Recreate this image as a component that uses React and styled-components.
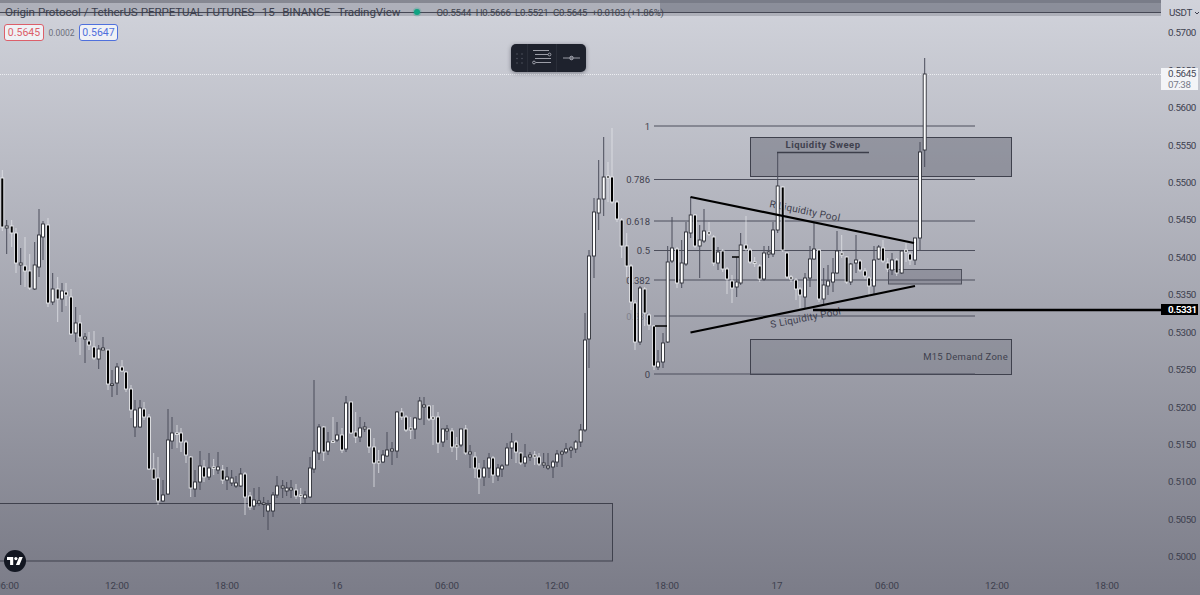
import React from "react";
import styled, { createGlobalStyle } from "styled-components";

const GlobalStyle = createGlobalStyle`
  html, body { margin: 0; padding: 0; background: #8a8b97; }
  * { box-sizing: border-box; }
`;

const FONT = `Roboto, "Liberation Sans", sans-serif`;

// x, body top, body bottom, high, low, up
const candles = [
  [2.3,178,227,170,231,0],[6.7,226,228,220,254,1],[11.7,226,233,220,247,0],[16,233,263,228,273,0],[20.7,263,265,248,285,1],
  [25,266,271,237,287,0],[29.7,271,288,254,290,0],[34.7,265,289,242,290,1],[39,235,267,209,277,1],[43,224,237,221,260,1],
  [48,225,303,218,307,0],[52.7,289,302,273,305,1],[57.7,289,299,277,322,0],[62,291,299,283,312,1],[66,292,295,283,306,0],
  [71,297,334,289,335,0],[75.7,323,333,307,342,1],[80,323,337,315,355,0],[85,337,339,333,363,1],[89,341,345,332,350,0],
  [94,347,358,331,360,0],[98.7,349,359,345,369,1],[103,348,350,337,350,1],[108,350,384,350,390,0],[112,384,385,370,397,1],
  [117,367,383,363,395,1],[122,367,371,360,372,0],[126,372,389,371,392,0],[131,389,410,385,418,0],[135,410,427,400,437,1],
  [140,408,427,400,428,1],[144,409,417,402,420,0],[149,417,469,414,470,0],[153.7,469,479,453,480,0],[158,478,501,457,505,0],
  [163,495,501,480,502,1],[168,440,494,409,495,1],[172,433,441,417,449,1],[177,433,434,425,448,0],[181,433,442,428,452,0],
  [186,442,455,440,463,0],[190.7,457,488,456,497,0],[195,482,489,470,497,1],[200,466,482,451,490,1],[204,467,477,460,482,0],
  [209,468,477,453,480,1],[213.7,467,468,459,475,0],[218,467,470,452,474,1],[222.7,470,480,465,484,0],[227,477,480,467,490,1],
  [231.7,478,483,470,486,1],[236,483,486,476,488,1],[240.7,474,486,468,487,1],[245,474,497,472,515,0],[250,496,507,492,510,0],
  [254,500,506,488,510,1],[259,501,503,487,506,1],[263.7,503,504,497,517,1],[268,505,511,500,530,1],[273,495,511,492,517,1],
  [277,486,495,476,498,1],[282.7,486,488,480,498,1],[286.7,488,491,482,496,1],[291,488,490,480,498,1],[296,490,496,484,499,0],
  [300.7,495,496,488,504,0],[305,495,498,491,503,1],[310,468,497,457,498,1],[314,451,469,380,473,1],[319,427,453,424,460,1],
  [323.7,427,452,426,461,0],[328,442,451,432,455,1],[333,441,442,417,443,0],[337,435,440,422,442,1],[342,435,450,428,453,0],
  [346,403,449,396,452,1],[351,402,433,402,434,0],[355.7,432,437,412,443,0],[360,428,437,417,442,1],[364.7,427,429,422,432,1],
  [369,429,447,428,453,0],[374,447,463,438,487,0],[378.7,461,463,450,473,0],[383,455,462,450,463,1],[387,450,456,432,457,1],
  [392,449,451,442,465,1],[397,412,451,411,458,1],[401.7,412,417,408,420,0],[406,417,430,415,432,0],[410.7,428,430,417,439,0],
  [415,418,429,417,439,1],[419.7,401,419,397,420,1],[424,405,407,397,425,1],[429,406,419,405,421,0],[433,417,419,405,445,0],
  [438,417,443,412,453,0],[443,429,442,429,447,1],[447,429,431,425,440,1],[452,431,447,428,452,0],[456.7,445,447,437,460,0],
  [461,429,445,429,447,1],[465.7,429,453,425,455,0],[470,452,454,445,468,1],[475,457,468,452,478,0],[479,469,478,463,494,0],
  [484,468,477,460,486,1],[489,458,468,453,478,1],[493,458,475,456,483,0],[498,468,476,464,481,1],[502,466,469,464,477,1],
  [507,448,465,443,465,1],[511.7,442,448,433,459,1],[516,442,452,440,463,0],[520.7,453,463,452,465,0],[525,457,463,444,467,1],
  [530,455,457,452,461,1],[534.7,455,457,451,465,0],[539,457,464,453,466,0],[543.7,463,465,453,468,1],[548,466,468,453,470,1],
  [553,462,467,460,478,1],[557,454,462,450,467,1],[562,452,454,450,467,1],[566,449,452,443,454,1],[571,448,450,446,458,1],
  [575.7,442,449,440,453,1],[580.7,430,442,424,447,1],[585,340,430,313,432,1],[589,256,339,250,368,1],[594,212,256,198,278,1],
  [598.7,199,213,160,230,1],[603.7,177,199,137,216,1],[608,176,178,162,202,0],[612,177,202,128,204,0],[617,202,219,200,222,0],
  [621.7,220,246,218,258,0],[626.7,246,266,233,277,0],[631,266,302,264,310,0],[635,303,342,300,350,0],[640,288,342,286,345,1],
  [644.7,289,313,287,326,0],[649,315,325,313,330,0],[654,326,366,325,370,0],[658,362,367,350,370,1],[663,343,362,333,368,1],
  [667.7,262,342,246,343,1],[672,248,261,217,263,1],[677,249,283,247,288,0],[681.7,263,283,240,288,1],[686,232,264,222,266,1],
  [690.7,215,233,197,238,1],[695,215,246,214,248,0],[699.7,240,246,225,278,1],[704,231,241,209,243,1],[709,232,234,222,236,0],
  [713.7,237,263,235,266,0],[718,252,263,247,270,1],[722.7,251,269,249,272,0],[727,269,279,267,294,0],[732,281,288,275,303,0],
  [736.7,282,287,257,297,1],[740.7,245,283,233,285,1],[746,245,249,216,251,0],[750,250,262,248,264,0],[754.7,262,263,257,267,0],
  [759.7,266,279,264,282,0],[764,253,279,246,281,1],[768.7,252,254,246,258,1],[773,230,254,222,257,1],[777.7,186,230,152,233,1],
  [782.7,187,250,186,252,0],[787,253,277,252,279,0],[791,277,279,275,282,0],[796,280,289,278,300,0],[800,289,295,287,308,0],
  [805,278,297,273,308,1],[810,259,278,246,287,1],[814,249,259,223,260,1],[819,250,299,249,302,0],[823.7,285,299,268,305,1],
  [828,281,286,265,295,1],[833,273,282,258,292,1],[837,251,273,231,274,1],[841.7,253,255,235,258,0],[846.7,257,282,256,284,0],
  [850.7,264,282,263,285,1],[856,260,263,235,273,1],[860,261,270,259,272,0],[865,271,276,268,279,0],[869,278,286,276,297,0],
  [874,260,286,246,295,1],[878.7,247,259,245,260,1],[883,248,261,240,263,0],[887.7,263,269,258,272,0],[892,260,270,253,275,1],
  [896.7,260,273,258,276,0],[901.7,251,273,250,274,1],[906,250,252,243,262,0],[910,254,260,252,265,0],[915,238,260,238,265,1],
  [920,152,238,142,250,1],[924.7,74,150,58,167,1],
];

const fibLevels = [
  { label: "1", y: 126 },
  { label: "0.786", y: 179.5 },
  { label: "0.618", y: 221 },
  { label: "0.5", y: 250.5 },
  { label: "0.382", y: 280 },
  { label: "0.236", y: 316, faint: true },
  { label: "0", y: 374 },
];

const prices = ["0.5700","0.5650","0.5600","0.5550","0.5500","0.5450","0.5400","0.5350","0.5300","0.5250","0.5200","0.5150","0.5100","0.5050","0.5000"];
const times = ["06:00","12:00","18:00","16","06:00","12:00","18:00","17","06:00","12:00","18:00"];

const Page = styled.div`
  position: relative;
  width: 1200px;
  height: 595px;
  display: flex;
  flex-direction: column;
  overflow: hidden;
  font-family: ${FONT};
  color: #3a3d4b;
  background: linear-gradient(180deg, #d1d3db 0%, #7b7c88 100%);
`;

const Main = styled.div`
  flex: 1;
  display: flex;
  min-height: 0;
`;

const ChartPane = styled.div`
  position: relative;
  width: 1161px;
  overflow: hidden;
`;

const ChartSvg = styled.svg`
  display: block;
  width: 1161px;
  height: 573px;
`;

const Legend = styled.div`
  position: absolute;
  top: 0;
  left: 5px;
  height: 24px;
  display: flex;
  align-items: center;
  white-space: nowrap;
`;

const Title = styled.span`
  font-size: 11.6px;
  letter-spacing: -0.1px;
  word-spacing: 0.3px;
  color: #3c3f4d;
`;

const TitlePart = styled.span`
  margin-left: 7.5px;
`;

const StatusDot = styled.span`
  width: 6px;
  height: 6px;
  border-radius: 50%;
  background: #0fa382;
  box-shadow: 0 0 0 1.5px rgba(15, 163, 130, 0.22);
  margin: 0 16px 0 14px;
`;

const Ohlc = styled.span`
  font-size: 9.6px;
  letter-spacing: -0.2px;
  display: flex;
  gap: 4.5px;
  color: #41444f;
`;

const QuoteRow = styled.div`
  position: absolute;
  top: 24px;
  left: 4px;
  display: flex;
  align-items: center;
`;

const Quote = styled.span`
  width: ${(p) => p.$w}px;
  height: 17px;
  display: flex;
  align-items: center;
  justify-content: center;
  font-size: 10.5px;
  background: #eff1f5;
  border: 1px solid ${(p) => p.$color};
  border-radius: 3px;
  color: ${(p) => p.$color};
`;

const Spread = styled.span`
  width: 35px;
  text-align: center;
  font-size: 8.5px;
  color: #6b6e7b;
`;

const Toolbar = styled.div`
  position: absolute;
  top: 44px;
  left: 511px;
  width: 75px;
  height: 28px;
  display: flex;
  align-items: stretch;
  background: #1e222d;
  border-radius: 5px;
  box-shadow: 0 1px 4px rgba(30, 34, 45, 0.45);
`;

const ToolCell = styled.div`
  width: ${(p) => p.$w}px;
  display: flex;
  align-items: center;
  justify-content: center;
  border-right: ${(p) => (p.$divided ? "1px solid #2a2e39" : "none")};
`;

const LogoBadge = styled.div`
  position: absolute;
  left: 4px;
  top: 550px;
  width: 22px;
  height: 22px;
  border-radius: 50%;
  background: #131722;
  display: flex;
  align-items: center;
  justify-content: center;
`;

const PriceAxis = styled.div`
  position: relative;
  width: 39px;
  font-size: 9.8px;
  letter-spacing: -0.35px;
  color: #3d404e;
`;

const AxisHead = styled.div`
  height: 14.3px;
  padding: 6px 0 0 8px;
  line-height: 14px;
  display: flex;
  gap: 2px;
  white-space: nowrap;
`;

const PriceTick = styled.div`
  height: 37.43px;
  line-height: 37.43px;
  padding-left: 7px;
`;

const PriceTag = styled.div`
  position: absolute;
  left: 0;
  top: ${(p) => p.$top}px;
  width: 37px;
  padding-left: 7px;
  background: ${(p) => (p.$dark ? "#000" : "#f3f4f7")};
  color: ${(p) => (p.$dark ? "#fff" : "#454856")};
  font-weight: ${(p) => (p.$dark ? 700 : 400)};
  line-height: 11px;
`;

const TagSub = styled.div`
  color: #777a87;
`;

const TimeAxis = styled.div`
  height: 22px;
  display: flex;
  overflow: hidden;
  padding-top: 7px;
  font-size: 9.8px;
  letter-spacing: -0.1px;
  color: #3d404e;
`;

const TimeTick = styled.div`
  flex: 0 0 110px;
  text-align: center;
  line-height: 12px;
  &:first-child { margin-left: -48px; }
`;

const Candle = ({ c }) => {
  const [x, top, bottom, high, low, up] = c;
  return (
    <g>
      <line x1={x} x2={x} y1={high} y2={low} stroke={up ? "#4b4d5a" : "#e4e5ea"} strokeOpacity={up ? 1 : 0.75} strokeWidth="1" />
      <rect
        x={x - 1.5}
        y={top}
        width="3"
        height={Math.max(bottom - top, 1.5)}
        fill={up ? "#fff" : "#000"}
        stroke={up ? "#2e3038" : "#e9eaee"}
        strokeWidth="0.9"
      />
    </g>
  );
};

const svgLabel = { fontFamily: FONT, fill: "#3f414e" };

const Chart = () => (
  <ChartSvg viewBox="0 0 1161 573">
    {/* overlapping boxes jammed against the top edge */}
    <rect x="-2" y="-2" width="1165" height="5" fill="#5d5f6b" fillOpacity="0.65" />
    <rect x="-2" y="3" width="1165" height="13" fill="#70727f" fillOpacity="0.35" />
    <rect x="660" y="-1" width="503" height="13" fill="#70727f" fillOpacity="0.55" />
    <line x1="0" x2="1161" y1="12.5" y2="12.5" stroke="#464855" strokeWidth="1" />

    <line x1="0" x2="1161" y1="74.5" y2="74.5" stroke="#eceef2" strokeWidth="1" strokeDasharray="1 1" />

    {/* zones under the candles */}
    <rect x="-2" y="503.5" width="614.5" height="57.5" fill="#50525f" fillOpacity="0.05" stroke="#3f414d" />
    <rect x="750.5" y="137.5" width="261" height="39" fill="#60626f" fillOpacity="0.45" stroke="#3f414d" />
    <rect x="750.5" y="339.5" width="261" height="35" fill="#60626f" fillOpacity="0.25" stroke="#3f414d" />
    <rect x="888.5" y="269.5" width="73" height="14.5" fill="#60626f" fillOpacity="0.35" stroke="#4e505c" />

    {fibLevels.map((l) => (
      <g key={l.label}>
        <line x1="654" x2="975" y1={l.y} y2={l.y} stroke="#4d4f5c" strokeWidth="1" />
        <text x="650" y={l.y + 3.5} textAnchor="end" fontSize="9.5" opacity={l.faint ? 0.35 : 1} style={svgLabel}>
          {l.label}
        </text>
      </g>
    ))}

    <text x="823" y="147.5" textAnchor="middle" fontSize="9.5" fontWeight="700" letterSpacing="0.5" style={svgLabel}>Liquidity Sweep</text>
    <text x="1008" y="360" textAnchor="end" fontSize="9.5" letterSpacing="0.3" style={svgLabel}>M15 Demand Zone</text>
    <text transform="translate(769 207) rotate(11.5)" fontSize="10" letterSpacing="0.2" style={svgLabel}>R Liquidity Pool</text>
    <text transform="translate(771 328) rotate(-11)" fontSize="10" letterSpacing="0.2" style={svgLabel}>S Liquidity Pool</text>

    {candles.map((c, i) => (
      <Candle key={i} c={c} />
    ))}

    <line x1="777" x2="869" y1="152.5" y2="152.5" stroke="#3c3e4a" strokeWidth="1.6" />
    <line x1="655" x2="667" y1="326" y2="326" stroke="#000" strokeWidth="1.5" />
    <line x1="732" x2="739" y1="257" y2="257" stroke="#000" strokeWidth="1.5" />
    <line x1="690.5" x2="914" y1="197" y2="243" stroke="#000" strokeWidth="2.2" />
    <line x1="690.5" x2="915" y1="332.5" y2="286" stroke="#000" strokeWidth="2.2" />
    <line x1="813" x2="1161" y1="310" y2="310" stroke="#000" strokeWidth="2.6" />
  </ChartSvg>
);

const App = () => (
  <Page>
    <GlobalStyle />
    <Main>
      <ChartPane>
        <Chart />
        <Legend>
          <Title>
            Origin Protocol / TetherUS PERPETUAL FUTURES
            <TitlePart>15</TitlePart>
            <TitlePart>BINANCE</TitlePart>
            <TitlePart>TradingView</TitlePart>
          </Title>
          <StatusDot />
          <Ohlc>
            <span>O0.5544</span>
            <span>H0.5666</span>
            <span>L0.5521</span>
            <span>C0.5645</span>
            <span>+0.0103 (+1.86%)</span>
          </Ohlc>
        </Legend>
        <QuoteRow>
          <Quote $w={40} $color="#dc5f6a">0.5645</Quote>
          <Spread>0.0002</Spread>
          <Quote $w={39} $color="#4f70dc">0.5647</Quote>
        </QuoteRow>
        <Toolbar>
          <ToolCell $w={17} $divided>
            <svg width="7" height="11" viewBox="0 0 7 11">
              {[1, 5.5, 10].map((y) =>
                [1, 6].map((x) => <circle key={`${x}-${y}`} cx={x} cy={y} r="0.7" fill="#5a5e6b" />)
              )}
            </svg>
          </ToolCell>
          <ToolCell $w={29} $divided>
            <svg width="20" height="18" viewBox="0 0 20 18" fill="none" stroke="#a9acb6" strokeWidth="0.9">
              <path d="M1 1.5h16M3 5.5h13M3 9.5h16M4 13.5h15" />
              <circle cx="17.5" cy="5.5" r="1.4" fill="#1e222d" />
              <circle cx="2" cy="13.5" r="1.4" fill="#1e222d" />
            </svg>
          </ToolCell>
          <ToolCell $w={29}>
            <svg width="17" height="6" viewBox="0 0 17 6" fill="none" stroke="#a9acb6" strokeWidth="0.9">
              <path d="M0 3h6.5M10.5 3H17" />
              <circle cx="8.5" cy="3" r="1.8" fill="#6b6e78" />
            </svg>
          </ToolCell>
        </Toolbar>
        <LogoBadge>
          <svg width="16" height="10" viewBox="0 0 36 22" fill="#fff">
            <path d="M14 20H7V9H0V2h14v18zM28 20h-8l7.5-18h8L28 20z" />
            <circle cx="20" cy="5.5" r="3.6" />
          </svg>
        </LogoBadge>
      </ChartPane>
      <PriceAxis>
        <AxisHead>
          USDT
          <svg width="6" height="14" viewBox="0 0 6 14" fill="none" stroke="#3d404e" strokeWidth="1">
            <path d="M1 6l2 2 2-2" />
          </svg>
        </AxisHead>
        {prices.map((p) => (
          <PriceTick key={p}>{p}</PriceTick>
        ))}
        <PriceTag $top={68}>
          0.5645
          <TagSub>07:38</TagSub>
        </PriceTag>
        <PriceTag $top={304} $dark>0.5331</PriceTag>
      </PriceAxis>
    </Main>
    <TimeAxis>
      {times.map((t, i) => (
        <TimeTick key={i}>{t}</TimeTick>
      ))}
    </TimeAxis>
  </Page>
);

export default App;
